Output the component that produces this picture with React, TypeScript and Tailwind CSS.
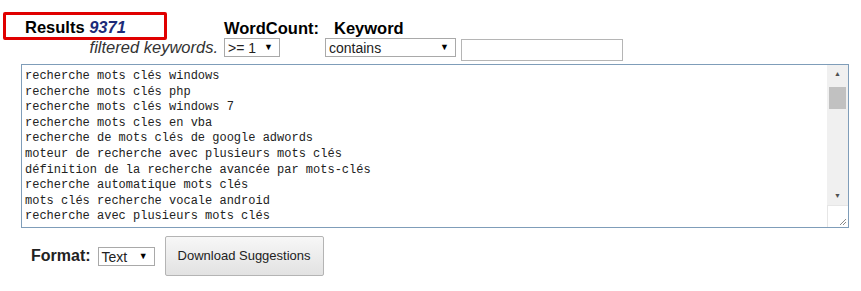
import React from 'react'

const lines = [
  'recherche mots clés windows',
  'recherche mots clés php',
  'recherche mots clés windows 7',
  'recherche mots cles en vba',
  'recherche de mots clés de google adwords',
  'moteur de recherche avec plusieurs mots clés',
  'définition de la recherche avancée par mots-clés',
  'recherche automatique mots clés',
  'mots clés recherche vocale android',
  'recherche avec plusieurs mots clés',
]

function FakeSelect({ label, width, height = 19 }: { label: string; width: string; height?: number }) {
  return (
    <div
      className={`flex items-center justify-between border border-[#a9a9a9] bg-white pl-[3px] pr-[6px] text-[14px] leading-none text-[#222] ${width}`}
      style={{ height }}
    >
      <span>{label}</span>
      <span className="text-[9px] text-black">▼</span>
    </div>
  )
}

export default function App() {
  return (
    <div className="h-[291px] w-[861px] bg-white font-['Liberation_Sans',Arial,sans-serif] text-black">
      {/* Header */}
      <div className="flex items-start pt-[12px]">
        <div className="ml-[3px] flex h-[28px] w-[164px] items-center rounded-[2px] border-[3px] border-[#e00000] pl-[19px] pt-[3px] text-[16.5px] font-bold">
          Results&nbsp;<i className="text-[#1c2a78]">9371</i>
        </div>
        <div className="ml-[57px] pt-[7px] text-[16.5px] font-bold leading-[18px]">WordCount:</div>
        <div className="ml-[15px] pt-[7px] text-[16.5px] font-bold leading-[18px]">Keyword</div>
      </div>

      {/* Filters */}
      <div className="-mt-[2px] flex items-start">
        <div className="w-[218px] text-right text-[16.5px] italic leading-[19px] text-[#333]">filtered keywords.</div>
        <div className="ml-[6px]">
          <FakeSelect label=">= 1" width="w-[56px]" />
        </div>
        <div className="ml-[45px]">
          <FakeSelect label="contains" width="w-[131px]" />
        </div>
        <div className="ml-[5px] mt-[1px] h-[22px] w-[162px] border border-[#b5b5b5] bg-white" />
      </div>

      {/* Results textarea */}
      <div className="ml-[21px] mt-[3px] flex h-[164px] w-[828px] border border-[#7f9db9] bg-white">
        <div className="flex-1 overflow-hidden pl-[3px] pt-[4px] font-['Liberation_Mono','DejaVu_Sans_Mono',monospace] text-[12px] leading-[15.6px] text-[#222]">
          {lines.map((l) => (
            <div key={l} className="whitespace-pre">{l}</div>
          ))}
        </div>
        <div className="flex w-[21px] flex-col">
          <div className="flex flex-1 flex-col bg-[#f0f0f0]">
            <div className="flex h-[18px] items-center justify-center text-[7px] text-[#505050]">▲</div>
            <div className="mx-[2px] mt-[4px] h-[22px] bg-[#c1c1c1]" />
            <div className="flex-1" />
            <div className="flex h-[18px] items-center justify-center text-[7px] text-[#505050]">▼</div>
          </div>
          <div className="relative h-[22px] border-l border-t border-[#e6e6e6] bg-white">
            <svg className="absolute bottom-[1px] right-[1px]" width="8" height="8" viewBox="0 0 8 8">
              <path d="M7 1 L1 7 M7 4 L4 7" stroke="#8a8a8a" strokeWidth="1" />
            </svg>
          </div>
        </div>
      </div>

      {/* Footer */}
      <div className="mt-[8px] flex items-center">
        <div className="ml-[31px] text-[16px] font-bold text-[#222]">Format:</div>
        <div className="ml-[7px] mt-[1px]">
          <FakeSelect label="Text" width="w-[57px]" height={19} />
        </div>
        <button className="ml-[10px] h-[40px] w-[159px] rounded-[2px] border border-[#b4b4b4] bg-gradient-to-b from-[#f7f7f7] to-[#e2e2e2] text-[13px] text-[#222]">
          Download Suggestions
        </button>
      </div>
    </div>
  )
}
